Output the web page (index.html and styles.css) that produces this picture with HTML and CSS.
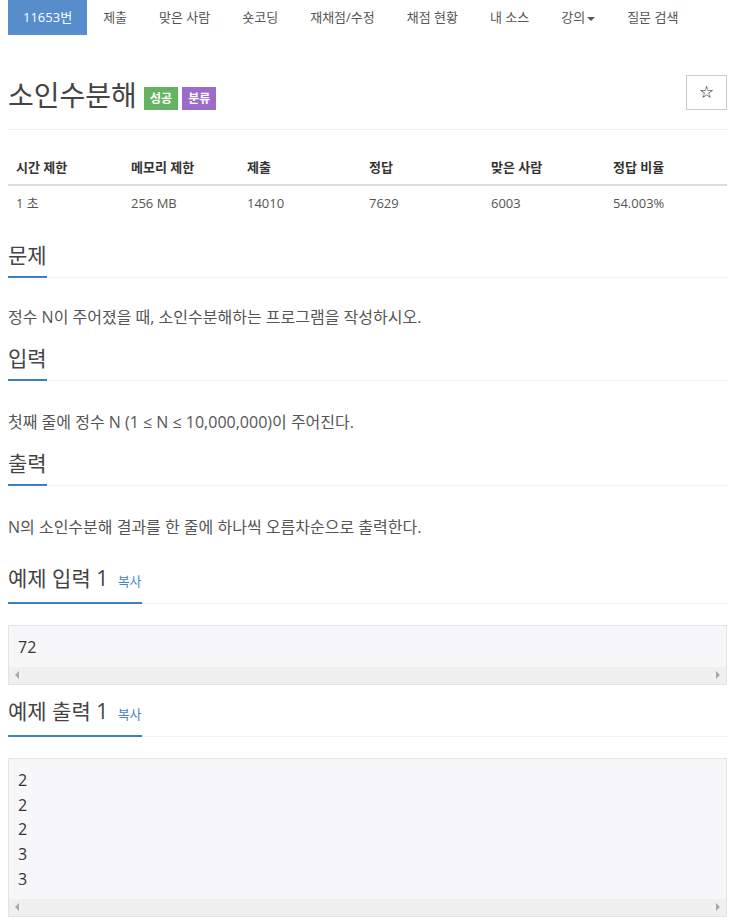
FILE: index.html
```html
<!DOCTYPE html>
<html lang="ko">
<head>
    <meta charset="UTF-8">
    <meta name="viewport" content="width=device-width, initial-scale=1.0">
    <title>11653번: 소인수분해</title>
    <link rel="stylesheet" href="styles.css">
</head>
<body>
    <div class="container">
        <ul class="problem-menu">
            <li class="active"><a href="#">11653번</a></li>
            <li><a href="#">제출</a></li>
            <li><a href="#">맞은 사람</a></li>
            <li><a href="#">숏코딩</a></li>
            <li><a href="#">재채점/수정</a></li>
            <li><a href="#">채점 현황</a></li>
            <li><a href="#">내 소스</a></li>
            <li><a href="#">강의<span class="caret"></span></a></li>
            <li><a href="#">질문 검색</a></li>
        </ul>

        <div class="page-header">
            <h1>소인수분해 <span class="label label-success">성공</span><span class="label label-purple">분류</span></h1>
            <button class="btn-star">☆</button>
        </div>

        <table class="problem-info">
            <thead>
                <tr>
                    <th class="col-first">시간 제한</th>
                    <th class="col-second">메모리 제한</th>
                    <th>제출</th>
                    <th>정답</th>
                    <th>맞은 사람</th>
                    <th>정답 비율</th>
                </tr>
            </thead>
            <tbody>
                <tr>
                    <td>1 초</td>
                    <td>256 MB</td>
                    <td>14010</td>
                    <td>7629</td>
                    <td>6003</td>
                    <td>54.003%</td>
                </tr>
            </tbody>
        </table>

        <section class="problem-section">
            <h2 class="headline"><span>문제</span></h2>
            <p>정수 N이 주어졌을 때, 소인수분해하는 프로그램을 작성하시오.</p>
        </section>

        <section class="problem-section">
            <h2 class="headline"><span>입력</span></h2>
            <p>첫째 줄에 정수 N (1 ≤ N ≤ 10,000,000)이 주어진다.</p>
        </section>

        <section class="problem-section">
            <h2 class="headline"><span>출력</span></h2>
            <p>N의 소인수분해 결과를 한 줄에 하나씩 오름차순으로 출력한다.</p>
        </section>

        <section class="problem-section sample">
            <h2 class="headline"><span>예제 입력 1 <a href="#" class="copy-button">복사</a></span></h2>
            <div class="sample-box">
                <pre>72</pre>
                <div class="scrollbar"><i class="arrow-left"></i><i class="arrow-right"></i></div>
            </div>
        </section>

        <section class="problem-section sample">
            <h2 class="headline"><span>예제 출력 1 <a href="#" class="copy-button">복사</a></span></h2>
            <div class="sample-box">
                <pre>2
2
2
3
3</pre>
                <div class="scrollbar"><i class="arrow-left"></i><i class="arrow-right"></i></div>
            </div>
        </section>
    </div>
</body>
</html>
```

FILE: styles.css
```css
body {
    font-family: "Open Sans", "Noto Sans CJK KR", sans-serif;
    font-size: 14px;
    color: #555;
    background-color: white;
    margin: 0;
    padding: 0;
}
a {
    text-decoration: none;
}
.container {
    width: 719px;
    margin-left: 8px;
}
.problem-menu {
    display: flex;
    list-style: none;
    margin: 0;
    padding: 0;
    height: 35px;
}
.problem-menu a {
    display: block;
    padding: 0 16px;
    line-height: 35px;
    font-size: 13px;
    color: #555;
}
.problem-menu li:first-child a {
    padding: 0 15px;
}
.problem-menu .active a {
    background-color: #568dca;
    color: white;
}
.caret {
    display: inline-block;
    width: 0;
    height: 0;
    margin-left: 2px;
    vertical-align: middle;
    border-top: 4px solid #555;
    border-left: 4px solid transparent;
    border-right: 4px solid transparent;
}
.page-header {
    display: flex;
    justify-content: space-between;
    align-items: flex-start;
    margin-top: 40px;
    padding-bottom: 17px;
    border-bottom: 1px solid #eee;
}
.page-header h1 {
    display: flex;
    align-items: center;
    height: 34px;
    margin: 3px 0 0;
    font-size: 28px;
    font-weight: normal;
    line-height: 34px;
    color: #444;
    white-space: pre;
}
.label {
    display: inline-block;
    height: 23px;
    line-height: 23px;
    padding: 0 6px;
    margin: 7px 4px 0 0;
    font-size: 12px;
    font-weight: bold;
    color: white;
}
.label-success {
    background-color: #62b462;
}
.label-purple {
    background-color: #9c6cc9;
}
.btn-star {
    width: 41px;
    height: 35px;
    background: white;
    border: 1px solid #ccc;
    font-size: 15px;
    color: #333;
    padding: 0;
}
.problem-info {
    width: 100%;
    margin-top: 20px;
    border-collapse: collapse;
    table-layout: fixed;
    font-size: 13px;
}
.problem-info th,
.problem-info td {
    box-sizing: border-box;
    text-align: left;
    padding: 8px;
    line-height: 18px;
    width: 122px;
}
.problem-info .col-first {
    width: 115px;
}
.problem-info .col-second {
    width: 116px;
}
.problem-info th {
    color: #333;
    font-weight: bold;
    border-bottom: 2px solid #ddd;
}
.problem-info td {
    color: #555;
}
.problem-section .headline {
    margin: 18px 0 0;
    font-size: 21px;
    font-weight: normal;
    line-height: 22px;
    color: #444;
    border-bottom: 1px dotted #e8e8e8;
}
.problem-section:first-of-type .headline {
    margin-top: 24px;
}
.headline span {
    display: inline-block;
    padding-bottom: 10px;
    margin-bottom: -1px;
    border-bottom: 2px solid #3e7fc3;
}
.problem-section p {
    margin: 27px 0 0;
    font-size: 16px;
    line-height: 24px;
}
.problem-section + .problem-section p {
    margin-top: 29px;
}
.sample .headline {
    margin-top: 28px;
}
.sample + .sample .headline {
    margin-top: 15px;
}
.copy-button {
    font-size: 13px;
    color: #4a86c5;
    margin-left: 4px;
}
.sample-box {
    margin-top: 21px;
    border: 1px solid #e3e3e8;
    background-color: #f7f7f9;
}
.sample-box pre {
    margin: 0;
    padding: 9px 9px 7px;
    font-family: "Open Sans", sans-serif;
    font-size: 16px;
    line-height: 24.75px;
    color: #333;
}
.scrollbar {
    display: flex;
    justify-content: space-between;
    align-items: center;
    height: 17px;
    padding: 0 6px;
    background-color: #f0f0f0;
}
.arrow-left,
.arrow-right {
    width: 0;
    height: 0;
    border-top: 4px solid transparent;
    border-bottom: 4px solid transparent;
}
.arrow-left {
    border-right: 4px solid #a8a8a8;
}
.arrow-right {
    border-left: 4px solid #a8a8a8;
}
```
